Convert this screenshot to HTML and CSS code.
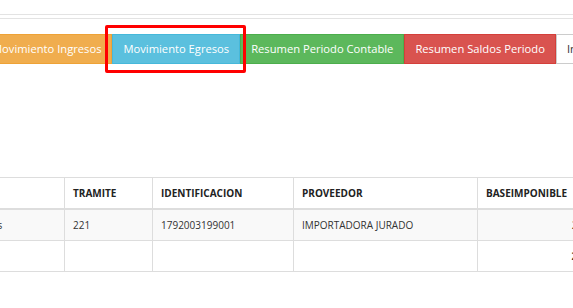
FILE: index.html
```html
<!DOCTYPE html>
<html lang="es">
<head>
    <meta charset="UTF-8">
    <meta name="viewport" content="width=device-width, initial-scale=1.0">
    <title>Reportes</title>
    <link rel="stylesheet" href="styles.css">
</head>
<body>
    <div class="page">
        <div class="rule"></div>

        <div class="toolbar">
            <a class="btn btn-warning" href="#">Movimiento Ingresos</a>
            <a class="btn btn-info selected" href="#">Movimiento Egresos</a>
            <a class="btn btn-success" href="#">Resumen Periodo Contable</a>
            <a class="btn btn-danger" href="#">Resumen Saldos Periodo</a>
            <a class="btn btn-default" href="#">Informe General</a>
        </div>

        <div class="table-wrap">
            <table class="grid">
                <colgroup>
                    <col class="col-tipo">
                    <col class="col-tramite">
                    <col class="col-ident">
                    <col class="col-prov">
                    <col class="col-base">
                </colgroup>
                <thead>
                    <tr>
                        <th>TIPO</th>
                        <th>TRAMITE</th>
                        <th>IDENTIFICACION</th>
                        <th>PROVEEDOR</th>
                        <th>BASEIMPONIBLE</th>
                    </tr>
                </thead>
                <tbody>
                    <tr class="odd">
                        <td>Egresos</td>
                        <td>221</td>
                        <td>1792003199001</td>
                        <td>IMPORTADORA JURADO</td>
                        <td class="num">224.11</td>
                    </tr>
                    <tr class="total">
                        <td></td>
                        <td></td>
                        <td></td>
                        <td></td>
                        <td class="num">224.11</td>
                    </tr>
                </tbody>
            </table>
        </div>
    </div>
</body>
</html>
```

FILE: styles.css
```css
:root {
    --txt-color: #333;
    --line: #ddd;
    --warning: #f0ad4e;
    --warning-border: #eea236;
    --info: #5bc0de;
    --info-border: #46b8da;
    --success: #5cb85c;
    --success-border: #4cae4c;
    --danger: #d9534f;
    --danger-border: #d43f3a;
}

body {
    margin: 0;
    padding: 0;
    background: #fff;
    color: var(--txt-color);
    font-family: "Open Sans", "Liberation Sans", sans-serif;
    overflow: hidden;
}

.page {
    width: 573px;
    height: 308px;
    overflow: hidden;
}

.rule {
    margin-top: 14px;
    height: 3px;
    border-top: 1px solid #e3e3e3;
    border-bottom: 1px solid #e3e3e3;
}

.toolbar {
    display: flex;
    margin-top: 15px;
    margin-left: -19px;
    white-space: nowrap;
}

.btn {
    position: relative;
    display: block;
    flex: none;
    padding: 5px 10px;
    font-size: 11.2px;
    line-height: 18px;
    color: #fff;
    text-decoration: none;
    border: 1px solid transparent;
}

.btn-warning {
    background: var(--warning);
    border-color: var(--warning-border);
}

.btn-info {
    background: var(--info);
    border-color: var(--info-border);
}

.btn-success {
    background: var(--success);
    border-color: var(--success-border);
}

.btn-danger {
    background: var(--danger);
    border-color: var(--danger-border);
}

.btn-default {
    background: #fff;
    border-color: #ccc;
    color: var(--txt-color);
}

/* red marker drawn round the chosen button */
.selected::after {
    content: "";
    position: absolute;
    top: -10px;
    bottom: -10px;
    left: -8px;
    right: -7px;
    border: 3px solid #f00;
    border-radius: 2px;
    z-index: 2;
}

.table-wrap {
    margin-top: 113px;
    margin-left: -43px;
}

.grid {
    border-collapse: collapse;
    table-layout: fixed;
    width: 654px;
    font-size: 10px;
    line-height: 16px;
}

.col-tipo { width: 107px; }
.col-tramite { width: 88px; }
.col-ident { width: 141px; }
.col-prov { width: 184px; }
.col-base { width: 134px; }

.grid th,
.grid td {
    padding: 7px 8px;
    border: 1px solid var(--line);
    text-align: left;
    white-space: nowrap;
    overflow: hidden;
}

.grid th {
    font-weight: 700;
    border-bottom-width: 2px;
    color: #222;
}

.grid .odd td {
    background: #f9f9f9;
}

.grid .num {
    text-align: right;
}

.grid .total .num {
    font-weight: 700;
}
```
